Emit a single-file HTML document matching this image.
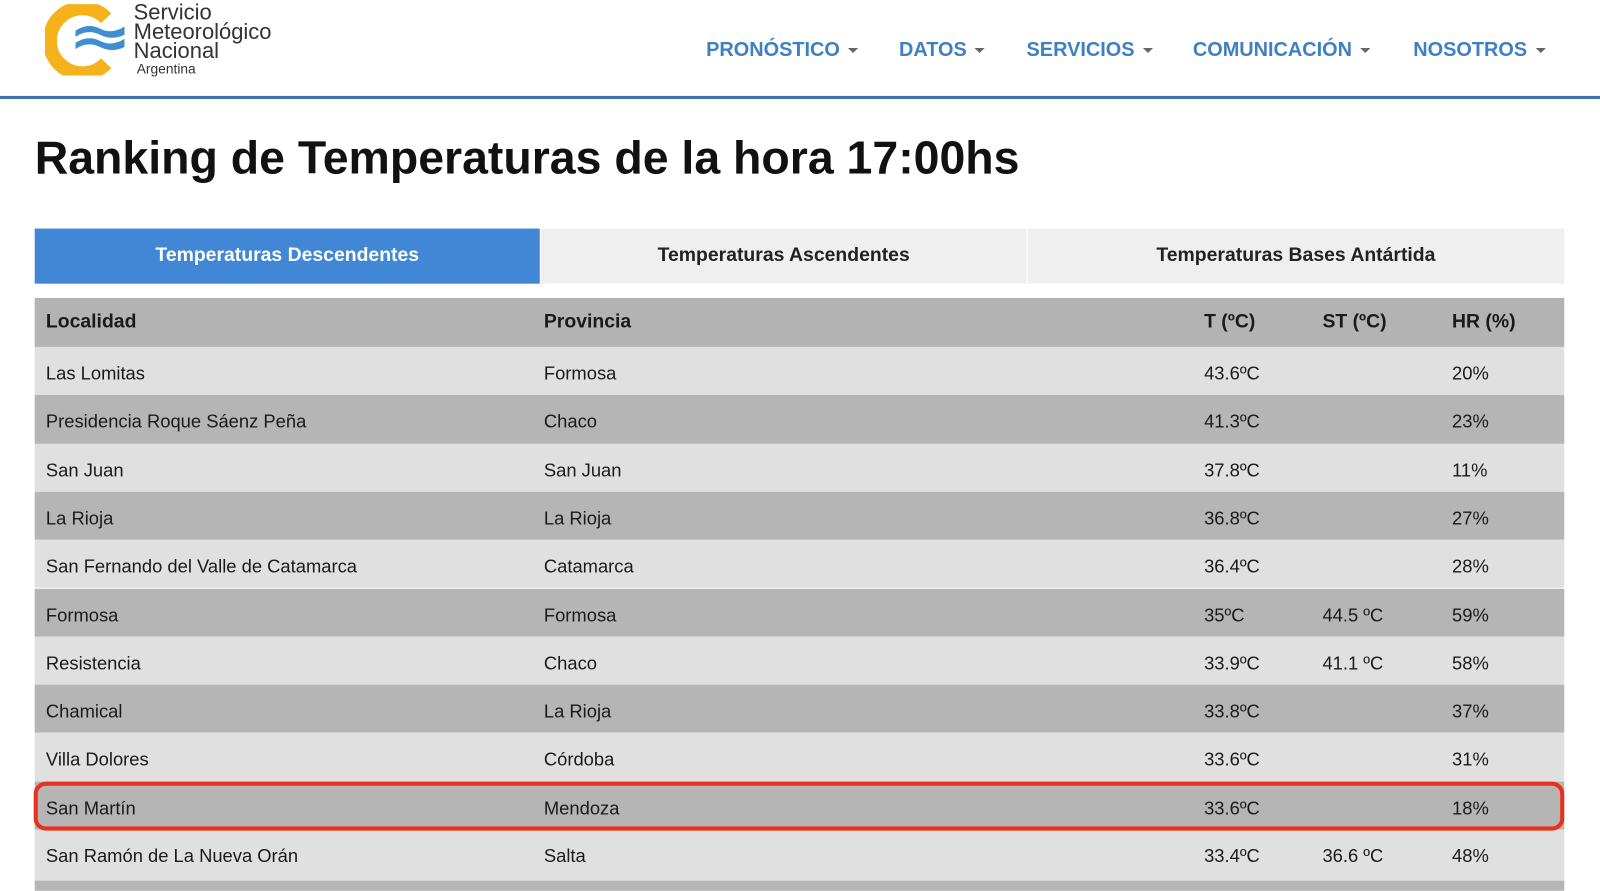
<!DOCTYPE html>
<html><head><meta charset="utf-8">
<style>
body{margin:0;width:1600px;height:885px;overflow:hidden;background:#fff;font-family:"Liberation Sans",sans-serif;color:#1a1a1a}
#w{position:absolute;left:0;top:0;width:1568px;height:867px;transform:scale(1.0204);transform-origin:0 0}
.a{position:absolute}
.nav{top:38px;font-size:19.5px;font-weight:bold;color:#3f80c2;white-space:nowrap}
.car{display:inline-block;width:0;height:0;border-left:5px solid transparent;border-right:5px solid transparent;border-top:5px solid #666;vertical-align:middle;margin-left:8px}
.tab{top:224px;height:54px;line-height:54px;text-align:center;font-size:19px;font-weight:bold;background:#efefef;color:#222}
.row{position:absolute;left:34px;width:1499px;height:47.3px;font-size:18px}
.row span{position:absolute;top:0;line-height:53px}
.c1{left:11px}.c2{left:499px}.c3{left:1146px}.c4{left:1262px}.c5{left:1389px}
</style></head><body><div id="w">
<svg class="a" style="left:44px;top:4px" width="82" height="70" viewBox="0 0 82 70">
<path d="M60 14 A32 32 0 1 0 60 58" fill="none" stroke="#f5b21a" stroke-width="14"/>
<path d="M30 26 q12 -8 24 -2 t24 -2 v8 q-12 6 -24 0 t-24 2z" fill="#3e8fd0"/>
<path d="M30 38 q12 -8 24 -2 t24 -2 v8 q-12 6 -24 0 t-24 2z" fill="#3e8fd0"/>
</svg>
<div class="a" style="left:131px;top:3px;font-size:21.5px;line-height:19px;color:#333">Servicio<br>Meteorológico<br>Nacional</div>
<div class="a" style="left:134px;top:60px;font-size:13.5px;color:#333">Argentina</div>
<div class="a nav" style="left:692px">PRONÓSTICO<span class="car"></span></div>
<div class="a nav" style="left:881px">DATOS<span class="car"></span></div>
<div class="a nav" style="left:1006px">SERVICIOS<span class="car"></span></div>
<div class="a nav" style="left:1169px">COMUNICACIÓN<span class="car"></span></div>
<div class="a nav" style="left:1385px">NOSOTROS<span class="car"></span></div>
<div class="a" style="left:0;top:94px;width:1568px;height:3px;background:#3d72ad"></div>
<div class="a" style="left:34px;top:129px;font-size:45.5px;font-weight:bold;color:#111">Ranking de Temperaturas de la hora 17:00hs</div>
<div class="a tab" style="left:34px;width:495px;background:#4287d6;color:#fff">Temperaturas Descendentes</div>
<div class="a tab" style="left:530px;width:476px">Temperaturas Ascendentes</div>
<div class="a tab" style="left:1007px;width:526px">Temperaturas Bases Antártida</div>
<div class="row" style="top:292px;height:48px;background:#b3b3b3;font-weight:bold;font-size:19px"><span class="c1" style="line-height:48px">Localidad</span><span class="c2" style="line-height:48px">Provincia</span><span class="c3" style="line-height:48px">T (ºC)</span><span class="c4" style="line-height:48px">ST (ºC)</span><span class="c5" style="line-height:48px">HR (%)</span></div>
<div class="row" style="top:340px;background:#e0e0e0"><span class="c1">Las Lomitas</span><span class="c2">Formosa</span><span class="c3">43.6ºC</span><span class="c5">20%</span></div>
<div class="row" style="top:387.3px;background:#b5b5b5"><span class="c1">Presidencia Roque Sáenz Peña</span><span class="c2">Chaco</span><span class="c3">41.3ºC</span><span class="c5">23%</span></div>
<div class="row" style="top:434.6px;background:#e0e0e0"><span class="c1">San Juan</span><span class="c2">San Juan</span><span class="c3">37.8ºC</span><span class="c5">11%</span></div>
<div class="row" style="top:481.9px;background:#b5b5b5"><span class="c1">La Rioja</span><span class="c2">La Rioja</span><span class="c3">36.8ºC</span><span class="c5">27%</span></div>
<div class="row" style="top:529.2px;background:#e0e0e0"><span class="c1">San Fernando del Valle de Catamarca</span><span class="c2">Catamarca</span><span class="c3">36.4ºC</span><span class="c5">28%</span></div>
<div class="row" style="top:576.5px;background:#b5b5b5"><span class="c1">Formosa</span><span class="c2">Formosa</span><span class="c3">35ºC</span><span class="c4">44.5 ºC</span><span class="c5">59%</span></div>
<div class="row" style="top:623.8px;background:#e0e0e0"><span class="c1">Resistencia</span><span class="c2">Chaco</span><span class="c3">33.9ºC</span><span class="c4">41.1 ºC</span><span class="c5">58%</span></div>
<div class="row" style="top:671.1px;background:#b5b5b5"><span class="c1">Chamical</span><span class="c2">La Rioja</span><span class="c3">33.8ºC</span><span class="c5">37%</span></div>
<div class="row" style="top:718.4px;background:#e0e0e0"><span class="c1">Villa Dolores</span><span class="c2">Córdoba</span><span class="c3">33.6ºC</span><span class="c5">31%</span></div>
<div class="row" style="top:765.7px;background:#b5b5b5"><span class="c1">San Martín</span><span class="c2">Mendoza</span><span class="c3">33.6ºC</span><span class="c5">18%</span></div>
<div class="row" style="top:813px;height:50px;background:#e0e0e0"><span class="c1">San Ramón de La Nueva Orán</span><span class="c2">Salta</span><span class="c3">33.4ºC</span><span class="c4">36.6 ºC</span><span class="c5">48%</span></div>
<div class="row" style="top:863px;height:10px;background:#b5b5b5"></div>
<div class="a" style="left:33px;top:766px;width:1492px;height:40px;border:4px solid #e8301c;border-radius:12px"></div>
</div></body></html>
